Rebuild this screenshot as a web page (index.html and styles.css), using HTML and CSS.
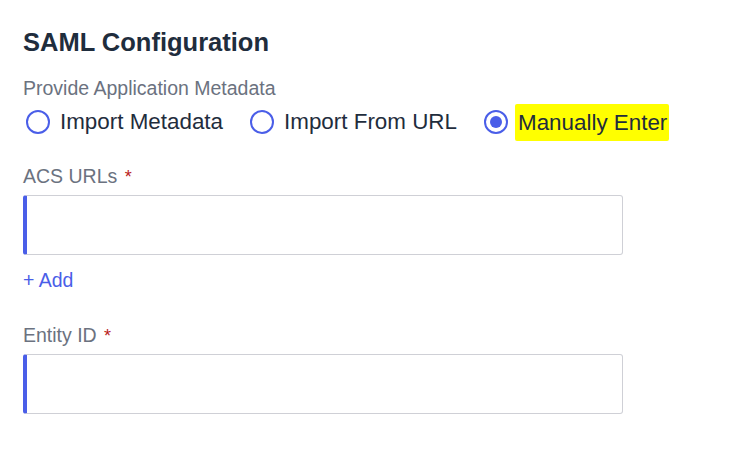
FILE: index.html
```html
<!DOCTYPE html>
<html>
<head>
<meta charset="utf-8">
<link rel="stylesheet" href="styles.css">
</head>
<body>
<div class="page">
  <h1 class="title">SAML Configuration</h1>
  <div class="sublabel">Provide Application Metadata</div>
  <div class="radios">
    <label class="radio"><span class="circle"></span><span class="rtext">Import Metadata</span></label>
    <label class="radio"><span class="circle"></span><span class="rtext">Import From URL</span></label>
    <label class="radio"><span class="circle checked"></span><span class="rtext hl">Manually Enter</span></label>
  </div>
  <div class="field first">
    <div class="flabel">ACS URLs <span class="req">*</span></div>
    <div class="input"></div>
    <div class="add">+ Add</div>
  </div>
  <div class="field second">
    <div class="flabel">Entity ID <span class="req">*</span></div>
    <div class="input"></div>
  </div>
</div>
</body>
</html>
```
FILE: styles.css
```css
html, body { margin: 0; padding: 0; background: #fff; }
body { font-family: "Liberation Sans", Arial, sans-serif; }
.page { padding: 27px 0 0 23px; }
.title { margin: 0; font-size: 25.5px; font-weight: bold; color: #1f2d3d; line-height: 30px; }
.sublabel { margin-top: 20px; font-size: 19.5px; color: #6b7280; line-height: 22px; }
.radios { display: flex; align-items: center; margin-top: 8px; height: 30px; }
.radio { display: flex; align-items: center; margin-right: 24px; }
.circle { width: 20px; height: 20px; border: 2px solid #4a5ee8; border-radius: 50%; box-sizing: content-box; margin: 0 10px 0 3px; position: relative; }
.circle.checked::after { content: ""; position: absolute; left: 4px; top: 4px; width: 12px; height: 12px; border-radius: 50%; background: #4a5ee8; }
.rtext { font-size: 22.4px; color: #1f2d3d; line-height: 30px; }
.hl { background: #ffff00; padding: 4px 2px 3px 3px; margin-left: -3px; border-radius: 2px; }
.field.first { margin-top: 27px; }
.field.second { margin-top: 32px; }
.flabel { font-size: 19.5px; color: #6b7280; line-height: 24px; }
.req { color: #b91c1c; margin-left: 2px; font-size: 18px; }
.input { margin-top: 6px; width: 595px; height: 58px; border: 1px solid #cfd0d6; border-left: 4px solid #4a5ee8; border-radius: 3px; }
.add { margin-top: 14px; font-size: 19.5px; color: #4a5ee8; line-height: 22px; }
```
